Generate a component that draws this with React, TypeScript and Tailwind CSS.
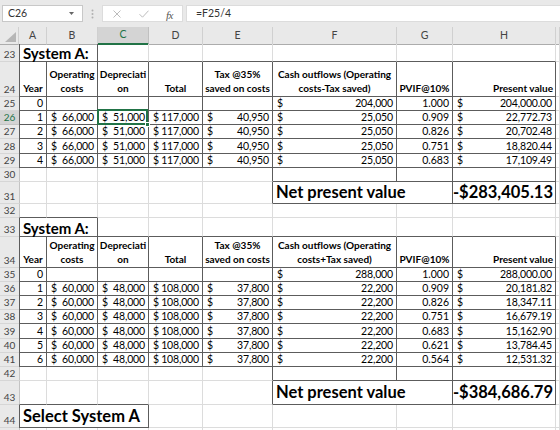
import React from "react";

type Cell = {
  span?: number;
  text?: string;
  lines?: string[];
  cur?: string;
  align?: "l" | "c" | "r";
  kind?: "data" | "head" | "title" | "big";
  box?: boolean;
  active?: boolean;
};

type Row = { n: number; h: string; cells: Cell[]; sel?: boolean; hideLabel?: boolean };

const COLS = "grid grid-cols-[19px_28px_51px_51px_54px_70px_124px_56px_103px_1fr]";
const LETTERS = ["A", "B", "C", "D", "E", "F", "G", "H", ""];

const E: Cell = {};
const BX: Cell = { box: true };

function header(fLine2: string): Cell[] {
  return [
    { lines: ["Year"], kind: "head", align: "c", box: true },
    { lines: ["Operating", "costs"], kind: "head", align: "c", box: true },
    { lines: ["Depreciati", "on"], kind: "head", align: "c", box: true },
    { lines: ["Total"], kind: "head", align: "c", box: true },
    { lines: ["Tax @35%", "saved on costs"], kind: "head", align: "c", box: true },
    { lines: ["Cash outflows (Operating", fLine2], kind: "head", align: "c", box: true },
    { lines: ["PVIF@10%"], kind: "head", align: "c", box: true },
    { lines: ["Present value"], kind: "head", align: "r", box: true },
    E,
  ];
}

function dataRow(year: number, op: string, dep: string, tot: string, tax: string, cash: string, pvif: string, pv: string, active = false): Cell[] {
  return [
    { text: String(year), align: "r", box: true },
    { cur: op, box: true },
    { cur: dep, box: true, active },
    { cur: tot, box: true },
    { cur: tax, box: true },
    { cur: cash, box: true },
    { text: pvif, align: "r", box: true },
    { cur: pv, box: true },
    E,
  ];
}

const plain = (): Cell[] => [E, E, E, E, E, E, E, E, E];
const tailBox = (): Cell[] => [E, E, E, E, E, BX, BX, BX, E];
const npv = (v: string): Cell[] => [
  E, E, E, E, E,
  { span: 2, text: "Net present value", kind: "big", align: "l", box: true },
  { text: v, kind: "big", align: "r", box: true },
  E,
];

const ROWS: Row[] = [
  { n: 23, h: "h-[18px]", cells: [{ span: 2, text: "System A:", kind: "title", box: true }, E, E, E, E, E, E, E] },
  { n: 24, h: "h-[35px]", cells: header("costs-Tax saved)") },
  { n: 25, h: "h-[14px]", cells: [{ text: "0", align: "r", box: true }, BX, BX, BX, BX, { cur: "204,000", box: true }, { text: "1.000", align: "r", box: true }, { cur: "204,000.00", box: true }, E] },
  { n: 26, h: "h-[14px]", sel: true, cells: dataRow(1, "66,000", "51,000", "117,000", "40,950", "25,050", "0.909", "22,772.73", true) },
  { n: 27, h: "h-[14px]", cells: dataRow(2, "66,000", "51,000", "117,000", "40,950", "25,050", "0.826", "20,702.48") },
  { n: 28, h: "h-[15px]", cells: dataRow(3, "66,000", "51,000", "117,000", "40,950", "25,050", "0.751", "18,820.44") },
  { n: 29, h: "h-[14px]", cells: dataRow(4, "66,000", "51,000", "117,000", "40,950", "25,050", "0.683", "17,109.49") },
  { n: 30, h: "h-[14px]", cells: tailBox() },
  { n: 31, h: "h-[22px]", cells: npv("-$283,405.13") },
  { n: 32, h: "h-[14px]", cells: plain() },
  { n: 33, h: "h-[19px]", cells: [{ span: 2, text: "System A:", kind: "title", box: true }, E, E, E, E, E, E, E] },
  { n: 34, h: "h-[31px]", cells: header("costs+Tax saved)") },
  { n: 35, h: "h-[14px]", cells: [{ text: "0", align: "r", box: true }, BX, BX, BX, BX, { cur: "288,000", box: true }, { text: "1.000", align: "r", box: true }, { cur: "288,000.00", box: true }, E] },
  { n: 36, h: "h-[14px]", cells: dataRow(1, "60,000", "48,000", "108,000", "37,800", "22,200", "0.909", "20,181.82") },
  { n: 37, h: "h-[14px]", cells: dataRow(2, "60,000", "48,000", "108,000", "37,800", "22,200", "0.826", "18,347.11") },
  { n: 38, h: "h-[14px]", cells: dataRow(3, "60,000", "48,000", "108,000", "37,800", "22,200", "0.751", "16,679.19") },
  { n: 39, h: "h-[15px]", cells: dataRow(4, "60,000", "48,000", "108,000", "37,800", "22,200", "0.683", "15,162.90") },
  { n: 40, h: "h-[14px]", cells: dataRow(5, "60,000", "48,000", "108,000", "37,800", "22,200", "0.621", "13,784.45") },
  { n: 41, h: "h-[14px]", cells: dataRow(6, "60,000", "48,000", "108,000", "37,800", "22,200", "0.564", "12,531.32") },
  { n: 42, h: "h-[14px]", cells: tailBox() },
  { n: 43, h: "h-[24px]", cells: npv("-$384,686.79") },
  { n: 44, h: "h-[23px]", cells: [{ span: 3, text: "Select System A", kind: "big", box: true }, E, E, E, E, E, E] },
  { n: 45, h: "h-[14px]", hideLabel: true, cells: plain() },
];

function boxMap(row?: Row): boolean[] {
  const m: boolean[] = [];
  if (!row) return Array(9).fill(false);
  for (const c of row.cells) {
    for (let i = 0; i < (c.span ?? 1); i++) m.push(!!c.box);
  }
  return m;
}

const SPAN: Record<number, string> = { 1: "", 2: "col-span-2", 3: "col-span-3" };

function CellView({ c, col, rightDark, bottomDark }: { c: Cell; col: number; rightDark: boolean; bottomDark: boolean }) {
  const borders = [
    "border-r border-b",
    rightDark ? "border-r-[#5c5c5c]" : "border-r-[#dcdcdc]",
    bottomDark ? "border-b-[#5c5c5c]" : "border-b-[#dcdcdc]",
    col === 0 ? (c.box ? "border-l border-l-[#5c5c5c]" : "border-l border-l-[#c4c4c4]") : "",
  ].join(" ");

  let body: React.ReactNode = null;
  if (c.cur) {
    body = (
      <div className="flex w-full justify-between items-center pl-[4px] pr-[3px] text-[10.5px] leading-none text-black">
        <span>$</span>
        <span className="tracking-[-0.15px]">{c.cur}</span>
      </div>
    );
  } else if (c.lines) {
    body = (
      <div className={`w-full flex flex-col pb-[1px] text-[10px] font-bold leading-[14px] text-black whitespace-nowrap ${c.align === "r" ? "items-end pr-[2px]" : "items-center"}`}>
        {c.lines.map((l) => <span key={l}>{l}</span>)}
      </div>
    );
  } else if (c.text) {
    const size = c.kind === "title" ? "text-[15px] font-bold pl-[3px] pt-[2px]" : c.kind === "big" ? "text-[16.5px] font-bold pl-[3px] pr-[2px]" : "text-[10.5px] pr-[3px]";
    const al = c.align === "r" ? "justify-end" : c.align === "c" ? "justify-center" : "justify-start";
    body = <div className={`w-full flex ${al} ${size} leading-none text-black whitespace-nowrap`}>{c.text}</div>;
  }

  return (
    <div className={`relative flex ${c.lines ? "items-end" : "items-center"} min-w-0 ${SPAN[c.span ?? 1]} ${borders}`}>
      {body}
      {c.active && (
        <div className="absolute -top-[2px] -left-[1px] -right-[0px] -bottom-[1px] border-2 border-[#217346] z-10 pointer-events-none">
          <div className="absolute -right-[4px] -bottom-[4px] w-[5px] h-[5px] bg-[#217346] border border-white" />
        </div>
      )}
    </div>
  );
}

function FormulaBar() {
  return (
    <div className="h-[27px] bg-[#e9e9e9] flex items-start pt-[5px]">
      <div className="ml-[2px] w-[81px] h-[17px] bg-white border border-[#c8c8c8] relative flex items-center pl-[5px] text-[10.5px] text-[#333]">
        C26
        <svg className="absolute right-[8px] top-[6px]" width="5" height="3" viewBox="0 0 5 3">
          <path d="M0 0h5L2.5 3z" fill="#666" />
        </svg>
      </div>
      <svg className="ml-[8px] mt-[4px]" width="3" height="10" viewBox="0 0 3 10">
        <circle cx="1.5" cy="1.5" r="1" fill="#b0b0b0" />
        <circle cx="1.5" cy="5" r="1" fill="#b0b0b0" />
        <circle cx="1.5" cy="8.5" r="1" fill="#b0b0b0" />
      </svg>
      <div className="ml-[8px] w-[81px] h-[17px] bg-white border border-[#dcdcdc] relative">
        <svg className="absolute left-[10px] top-[4px]" width="8" height="8" viewBox="0 0 8 8">
          <path d="M0.5 0.5l7 7M7.5 0.5l-7 7" stroke="#b4b4b4" strokeWidth="0.9" />
        </svg>
        <svg className="absolute left-[36px] top-[4px]" width="10" height="8" viewBox="0 0 10 8">
          <path d="M0.5 4.2l3 3 6-6.5" stroke="#b4b4b4" strokeWidth="0.9" fill="none" />
        </svg>
        <span className="absolute left-[63px] top-[1px] text-[11px] italic text-[#555] font-['Liberation_Serif',serif] tracking-[-0.5px]">fx</span>
      </div>
      <div className="ml-[3px] flex-1 h-[17px] bg-white border border-[#dcdcdc] border-r-0 flex items-center pl-[9px] text-[10.5px] text-[#333]">
        =F25/4
      </div>
    </div>
  );
}

function ColumnHeader() {
  return (
    <div className={`${COLS} h-[17px] bg-[#e9e9e9]`}>
      <div className="relative border-b border-b-[#acacac] border-r border-r-[#d0d0d0]">
        <svg className="absolute right-[2px] bottom-[2px]" width="11" height="10" viewBox="0 0 11 10">
          <path d="M11 0V10H0z" fill="#b6b6b6" />
        </svg>
      </div>
      {LETTERS.map((l, i) =>
        i === 2 ? (
          <div key={i} className="flex items-center justify-center text-[10.5px] text-[#217346] bg-[#d4d4d4] border-r border-r-[#c0c0c0] border-b-2 border-b-[#217346]">
            {l}
          </div>
        ) : (
          <div key={i} className="flex items-center justify-center text-[10.5px] text-[#444] border-r border-r-[#d0d0d0] border-b border-b-[#acacac]">
            {l}
          </div>
        )
      )}
    </div>
  );
}

export default function App() {
  return (
    <div className="w-[560px] h-[430px] overflow-hidden bg-white font-[Lato,sans-serif]">
      <FormulaBar />
      <ColumnHeader />
      {ROWS.map((row, ri) => {
        const below = boxMap(ROWS[ri + 1]);
        const mine = boxMap(row);
        let col = 0;
        return (
          <div key={row.n} className={`${COLS} ${row.h}`}>
            <div
              className={`flex items-end justify-center pb-[1px] text-[10px] leading-[12px] border-b ${
                row.sel ? "bg-[#d4d4d4] text-[#217346] border-b-[#c4c4c4]" : "bg-[#e9e9e9] text-[#444] border-b-[#d6d6d6]"
              }`}
            >
              {row.hideLabel ? "" : row.n}
            </div>
            {row.cells.map((c, i) => {
              const start = col;
              const span = c.span ?? 1;
              col += span;
              const rightDark = !!c.box || !!mine[start + span];
              const bottomDark = !!c.box || below.slice(start, start + span).some(Boolean);
              return <CellView key={i} c={c} col={start} rightDark={rightDark} bottomDark={bottomDark} />;
            })}
          </div>
        );
      })}
    </div>
  );
}
